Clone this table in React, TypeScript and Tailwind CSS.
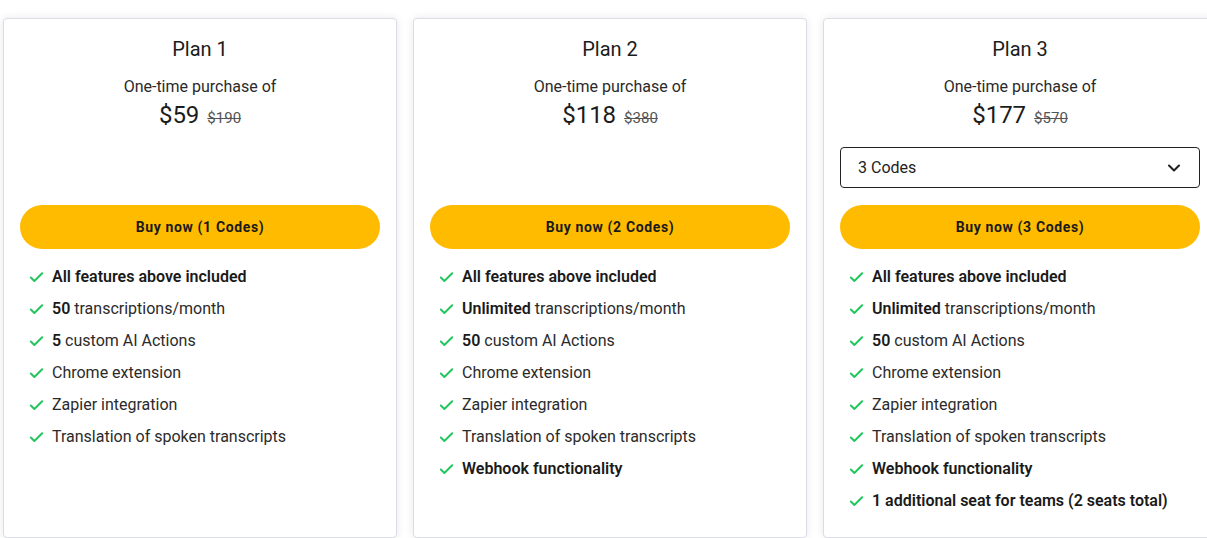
import { Check, ChevronDown } from "lucide-react";

type Feature = { bold?: string; text?: string };

const plans: {
  name: string;
  price: string;
  was: string;
  codes: number;
  select?: boolean;
  features: Feature[];
}[] = [
  {
    name: "Plan 1",
    price: "$59",
    was: "$190",
    codes: 1,
    features: [
      { bold: "All features above included" },
      { bold: "50", text: " transcriptions/month" },
      { bold: "5", text: " custom AI Actions" },
      { text: "Chrome extension" },
      { text: "Zapier integration" },
      { text: "Translation of spoken transcripts" },
    ],
  },
  {
    name: "Plan 2",
    price: "$118",
    was: "$380",
    codes: 2,
    features: [
      { bold: "All features above included" },
      { bold: "Unlimited", text: " transcriptions/month" },
      { bold: "50", text: " custom AI Actions" },
      { text: "Chrome extension" },
      { text: "Zapier integration" },
      { text: "Translation of spoken transcripts" },
      { bold: "Webhook functionality" },
    ],
  },
  {
    name: "Plan 3",
    price: "$177",
    was: "$570",
    codes: 3,
    select: true,
    features: [
      { bold: "All features above included" },
      { bold: "Unlimited", text: " transcriptions/month" },
      { bold: "50", text: " custom AI Actions" },
      { text: "Chrome extension" },
      { text: "Zapier integration" },
      { text: "Translation of spoken transcripts" },
      { bold: "Webhook functionality" },
      { bold: "1 additional seat for teams (2 seats total)" },
    ],
  },
];

export default function App() {
  return (
    <div
      className="h-[538px] w-[1207px] overflow-hidden bg-white"
      style={{ fontFamily: "Roboto, 'Liberation Sans', sans-serif" }}
    >
      <div className="flex gap-[16px] pl-[3px] pt-[18px]">
        {plans.map((p) => (
          <div
            key={p.name}
            className="flex w-[394px] shrink-0 flex-col rounded-[4px] border border-[#dcdce4] bg-white px-[16px] pb-6 pt-4 shadow-[0_0_10px_rgba(0,0,0,0.09)]"
          >
            {/* header */}
            <div className="text-center">
              <h2 className="text-[20px] leading-7 text-[#1c1c1c]">{p.name}</h2>
              <p className="mt-[13px] text-[16px] leading-[22px] text-[#2a2a2a]">
                One-time purchase of
              </p>
              <div className="mt-[2px] flex items-baseline justify-center gap-2 leading-[30px]">
                <span className="text-[24px] text-[#1c1c1c]">{p.price}</span>
                <span className="text-[15px] text-[#555] line-through">{p.was}</span>
              </div>
            </div>

            {/* code picker */}
            <div
              className={
                "mt-[14px] flex h-[41px] items-center justify-between rounded-[4px] border border-[#222] pl-[17px] pr-[15px] text-[16px] text-[#222] " +
                (p.select ? "" : "invisible")
              }
            >
              <span>3 Codes</span>
              <ChevronDown className="h-5 w-5" strokeWidth={2.5} />
            </div>

            <button className="mt-[17px] h-[44px] w-full rounded-full bg-[#ffbb00] text-[14px] font-bold tracking-[0.045em] text-[#1a1a1a]">
              Buy now ({p.codes} Codes)
            </button>

            <ul className="mt-[16px] flex flex-col gap-2 pl-2">
              {p.features.map((f, i) => (
                <li key={i} className="flex items-center gap-[7px] text-[16px] leading-6 text-[#2b2b2b]">
                  <Check className="h-[17px] w-[17px] shrink-0 text-[#22c55e]" strokeWidth={2.75} />
                  <span>
                    {f.bold && <span className="font-semibold text-[#1a1a1a]">{f.bold}</span>}
                    {f.text}
                  </span>
                </li>
              ))}
            </ul>
          </div>
        ))}
      </div>
    </div>
  );
}
